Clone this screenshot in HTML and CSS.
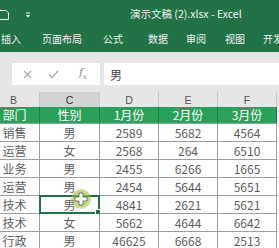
FILE: index.html
```html
<!DOCTYPE html>
<html lang="zh">
<head>
<meta charset="utf-8">
<link rel="stylesheet" href="styles.css">
</head>
<body>
<div class="app">
  <header class="titlebar">
    <div class="qat">
      <svg class="save" width="9" height="11" viewBox="0 0 9 11"><path d="M-1 1.5 H6 L8.5 4 V10.5 H-1" fill="none" stroke="#fff" stroke-width="1"/></svg>
      <svg class="qat-more" width="6" height="6" viewBox="0 0 6 6"><path d="M1 1 H5" stroke="#fff" stroke-width="1"/><path d="M1 3 H5 L3 5.5 Z" fill="#fff"/></svg>
    </div>
    <div class="title">演示文稿 (2).xlsx - Excel</div>
  </header>
  <nav class="tabs">
    <span class="tab t1">插入</span>
    <span class="tab t2">页面布局</span>
    <span class="tab t3">公式</span>
    <span class="tab t4">数据</span>
    <span class="tab t5">审阅</span>
    <span class="tab t6">视图</span>
    <span class="tab t7">开发</span>
  </nav>
  <div class="formula">
    <div class="fx-tools">
      <svg width="9" height="9" viewBox="0 0 9 9"><path d="M1 1 L8 8 M8 1 L1 8" stroke="#a9a9a9" stroke-width="1.2"/></svg>
      <svg width="11" height="9" viewBox="0 0 11 9"><path d="M1 4.5 L4 7.5 L10 1" fill="none" stroke="#a9a9a9" stroke-width="1.3"/></svg>
      <span class="fx"><i>f</i><sub>x</sub></span>
    </div>
    <div class="fx-input">男</div>
  </div>
  <div class="sheet">
    <div class="ch">B</div><div class="ch sel-col">C</div><div class="ch">D</div><div class="ch">E</div><div class="ch">F</div><div class="ch">G</div>

    <div class="c h">部门</div><div class="c h">性别</div><div class="c h">1月份</div><div class="c h">2月份</div><div class="c h">3月份</div><div class="c e"></div>

    <div class="c">销售</div><div class="c">男</div><div class="c">2589</div><div class="c">5682</div><div class="c">4564</div><div class="c e"></div>
    <div class="c">运营</div><div class="c">女</div><div class="c">2568</div><div class="c">264</div><div class="c">6510</div><div class="c e"></div>
    <div class="c">业务</div><div class="c">男</div><div class="c">2455</div><div class="c">6266</div><div class="c">1665</div><div class="c e"></div>
    <div class="c">运营</div><div class="c">男</div><div class="c">2454</div><div class="c">5644</div><div class="c">5651</div><div class="c e"></div>
    <div class="c">技术</div><div class="c sel">男</div><div class="c">4841</div><div class="c">2621</div><div class="c">5621</div><div class="c e"></div>
    <div class="c">技术</div><div class="c">女</div><div class="c">5662</div><div class="c">4644</div><div class="c">6642</div><div class="c e"></div>
    <div class="c">行政</div><div class="c">男</div><div class="c">46625</div><div class="c">6668</div><div class="c">2513</div><div class="c e"></div>
  </div>
  <div class="cursor">
    <svg width="14" height="14" viewBox="0 0 14 14"><path d="M5 1 H9 V5 H13 V9 H9 V13 H5 V9 H1 V5 H5 Z" fill="#fff" stroke="#555" stroke-width="0.8"/></svg>
  </div>
</div>
</body>
</html>
```

FILE: styles.css
```css
* { box-sizing: border-box; }
html, body { margin: 0; padding: 0; }
body {
  width: 279px;
  height: 248px;
  overflow: hidden;
  font-family: "Noto Sans CJK SC", "Noto Sans", sans-serif;
  background: #fff;
}
.app {
  position: relative;
  width: 279px;
  height: 248px;
  overflow: hidden;
}
.titlebar {
  height: 27px;
  background: #217346;
  display: flex;
  align-items: center;
  color: #fff;
}
.qat {
  width: 130px;
  display: flex;
  align-items: center;
  gap: 16px;
  padding-top: 2px;
}
.save { display: block; }
.title {
  font-size: 10.5px;
  line-height: 1;
  color: #f2f2f2;
  white-space: nowrap;
  padding-top: 1px;
}
.tabs {
  height: 25px;
  background: #217346;
  display: flex;
  align-items: flex-start;
  color: #f0f0f0;
  font-size: 10px;
  line-height: 1;
  padding-top: 7px;
  white-space: nowrap;
}
.tab { display: block; }
.t1 { margin-left: 1px; }
.t2 { margin-left: 21px; }
.t3 { margin-left: 21px; }
.t4 { margin-left: 25px; }
.t5 { margin-left: 18px; }
.t6 { margin-left: 19px; }
.t7 { margin-left: 18px; }
.formula {
  height: 40px;
  background: #e6e6e6;
  display: flex;
  padding: 11px 0 7px 12px;
  gap: 4px;
}
.fx-tools {
  width: 88px;
  background: #fff;
  display: flex;
  align-items: center;
  padding-left: 11px;
  gap: 16px;
}
.fx {
  font-family: "DejaVu Serif", serif;
  font-size: 11px;
  color: #8a8a8a;
  margin-left: 4px;
}
.fx sub { font-size: 7px; font-style: italic; }
.fx-input {
  flex: 1;
  background: #fff;
  font-size: 12px;
  color: #444;
  display: flex;
  align-items: center;
  padding-left: 6px;
}
.sheet {
  display: grid;
  grid-template-columns: 58px 60px 59px 59px 59px 40px;
  grid-template-rows: 15px 17px repeat(7, 18px);
  margin-left: -18px;
  background: #e6e6e6;
}
.ch {
  background: #e6e6e6;
  border-right: 1px solid #c8c8c8;
  font-family: "Liberation Sans", sans-serif;
  font-size: 10.5px;
  color: #555;
  display: flex;
  align-items: center;
  justify-content: center;
  line-height: 1;
  padding-top: 1px;
}
.ch:first-child { padding-left: 6px; }
.ch.sel-col { background: #d3d3d3; color: #333; }
.c {
  position: relative;
  background: #fff;
  border-right: 1px solid #9e9e9e;
  border-bottom: 1px solid #9e9e9e;
  display: flex;
  align-items: center;
  justify-content: center;
  font-size: 12px;
  line-height: 1;
  color: #5e5e5e;
  white-space: nowrap;
}
.c:nth-child(6n+1) { padding-left: 8px; }
.c.h {
  background: #2aa15a;
  color: #fff;
  border-right-color: #1d8046;
  border-bottom-color: #9e9e9e;
}
.c.e { background: #fff; border-right: none; border-bottom: 1px solid #e0e0e0; }
.c.sel::before {
  content: "";
  position: absolute;
  left: -1px;
  top: -1px;
  right: -1px;
  bottom: -1px;
  border: 2px solid #217346;
}
.c.sel::after {
  content: "";
  position: absolute;
  right: -3px;
  bottom: -3px;
  width: 5px;
  height: 5px;
  background: #217346;
  border: 1px solid #fff;
}
.cursor {
  position: absolute;
  left: 71px;
  top: 189px;
  width: 20px;
  height: 20px;
  border-radius: 50%;
  background: radial-gradient(circle, rgba(170,200,60,0.9) 0%, rgba(150,190,50,0.55) 60%, rgba(150,190,50,0) 100%);
  display: flex;
  align-items: center;
  justify-content: center;
}
```
